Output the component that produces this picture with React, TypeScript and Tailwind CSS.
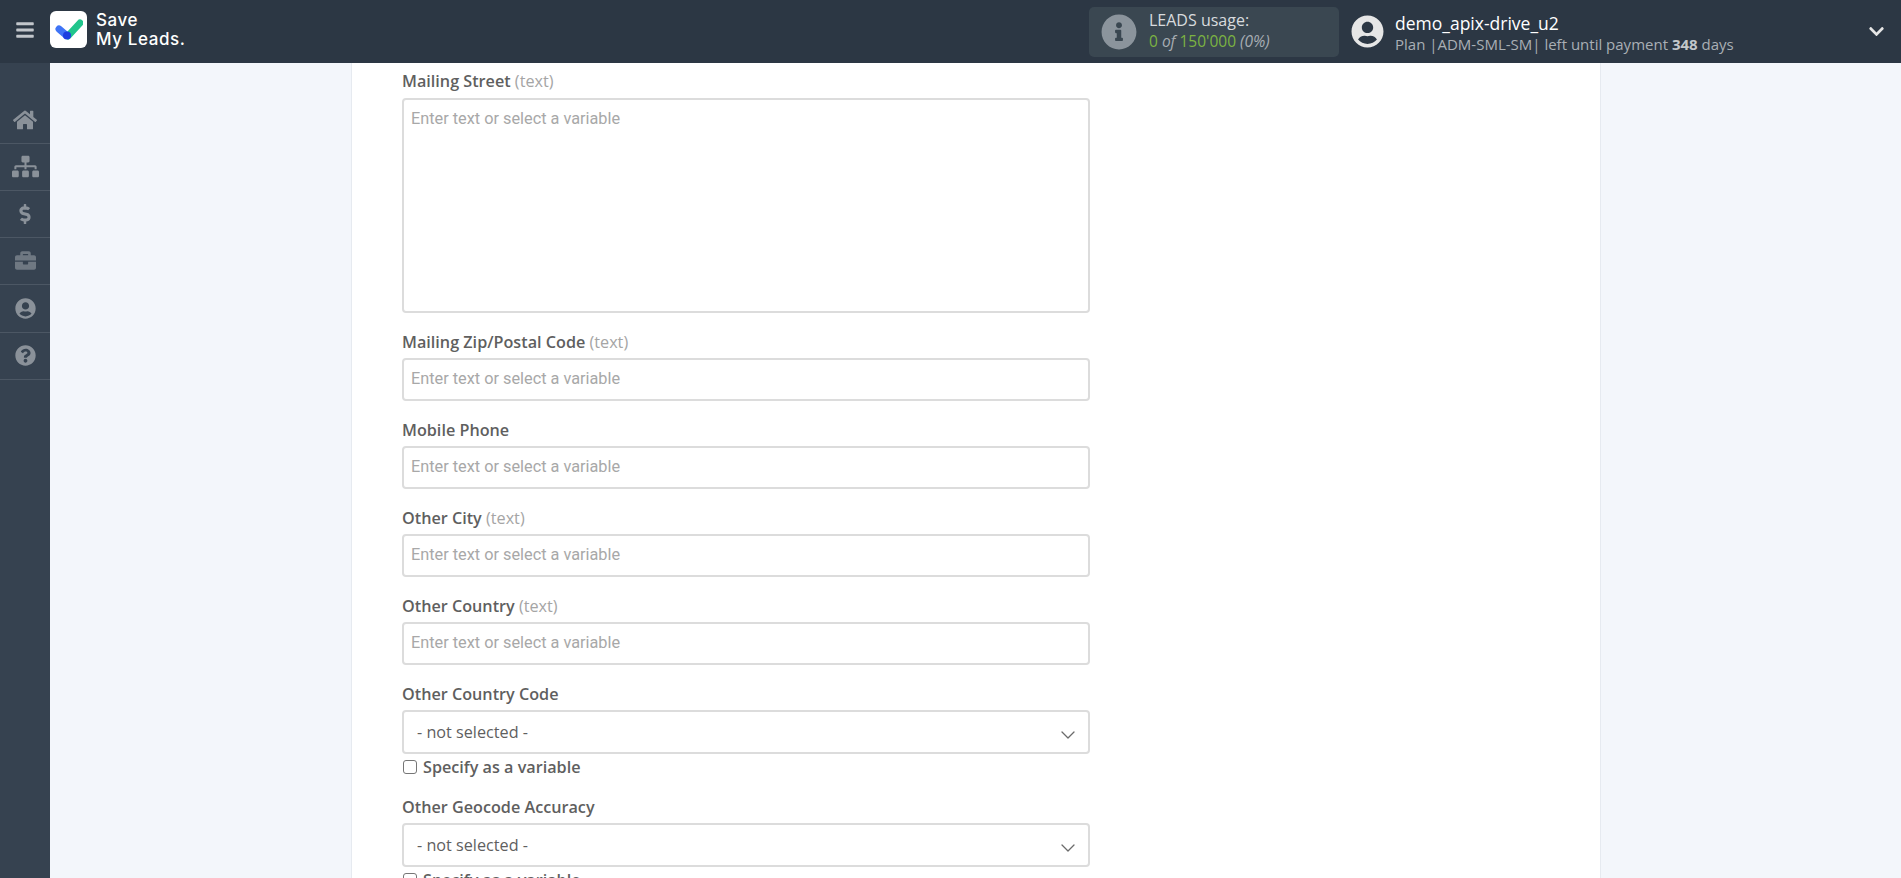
import { ChevronDown } from "lucide-react";
import {
  FaBars,
  FaBriefcase,
  FaChevronDown,
  FaDollarSign,
  FaHome,
  FaInfoCircle,
  FaQuestionCircle,
  FaSitemap,
  FaUserCircle,
} from "react-icons/fa";

const navItems = [
  { icon: FaHome, size: 24, color: "text-[#8a9199]", row: "h-[47px]" },
  { icon: FaSitemap, size: 27, color: "text-[#8a9199]", row: "h-[47px]" },
  { icon: FaDollarSign, size: 20, color: "text-[#8a9199]", row: "h-[47px]" },
  { icon: FaBriefcase, size: 21, color: "text-[#6f7882]", row: "h-[47px]" },
  { icon: FaUserCircle, size: 21, color: "text-[#8a9199]", row: "h-[48px]" },
  { icon: FaQuestionCircle, size: 21, color: "text-[#8a9199]", row: "h-[47px]" },
];

function Label({ name, hint }: { name: string; hint?: string }) {
  return (
    <div className="h-[22px] text-[16.2px] leading-[22px] font-semibold text-[#5f5f5f]">
      {name}
      {hint ? <span className="font-normal text-[#a5a5a5]"> ({hint})</span> : null}
    </div>
  );
}

function TextField({ name, hint }: { name: string; hint?: string }) {
  return (
    <div className="mb-[18px]">
      <Label name={name} hint={hint} />
      <div className="mt-[5px] flex h-[43px] items-center rounded-[4px] border-2 border-[#dcdcdc] bg-white px-[7px] pb-[1px] font-['Roboto',sans-serif] text-[16.3px] text-[#a8a8a8]">
        Enter text or select a variable
      </div>
    </div>
  );
}

function SelectField({ name }: { name: string }) {
  return (
    <div className="mb-[18px]">
      <Label name={name} />
      <div className="mt-[5px] flex h-[44px] items-center justify-between rounded-[4px] border-2 border-[#dcdcdc] bg-white pr-[8px] pl-[13px] text-[16.2px] text-[#5f5f5f]">
        - not selected -
        <ChevronDown className="mt-[6px] h-6 w-6 text-[#6b6b6b]" strokeWidth={1.3} />
      </div>
      <label className="mt-[2px] flex h-[22px] items-center text-[16.2px] font-semibold text-[#5f5f5f]">
        <span className="mr-[6px] ml-[1px] h-[14px] w-[14px] rounded-[3px] border border-[#767676] bg-white" />
        Specify as a variable
      </label>
    </div>
  );
}

export default function App() {
  return (
    <div className="flex h-[878px] flex-col overflow-hidden bg-[#f3f6fb] font-['Open_Sans',sans-serif]">
      <header className="flex h-[63px] shrink-0 items-center bg-[#2c3744]">
        <div className="mb-[3px] flex w-[50px] justify-center">
          <FaBars className="text-[#c2c6cb]" size={20} />
        </div>
        <div className="mb-[4px] flex h-[37px] w-[37px] items-center justify-center rounded-[6px] bg-white">
          <svg width="28" height="22" viewBox="0 0 28 22">
            <path d="M13 17 L25 4" stroke="#20c58c" strokeWidth="7" strokeLinecap="round" fill="none" />
            <path d="M4 10 L11 16" stroke="#3f74f6" strokeWidth="7" strokeLinecap="round" fill="none" />
            <circle cx="12" cy="16.5" r="4" fill="#1c3fe0" />
          </svg>
        </div>
        <div className="mb-[4px] ml-[9px] font-['Inter',sans-serif] text-[17px] leading-[19px] font-medium tracking-[0.6px] text-white">
          Save
          <br />
          My Leads.
        </div>
        <div className="ml-auto flex h-[50px] w-[250px] items-center rounded-[5px] bg-[#3a4751] pl-[12px]">
          <FaInfoCircle className="text-[#8b949c]" size={36} />
          <div className="mb-[2px] ml-[12px] text-[15.5px] leading-[21px]">
            <div className="text-[16px] text-[#d8dbde]">LEADS usage:</div>
            <div className="text-[#7cb342]">
              0 <i className="text-[#a7adb3]">of</i> 150'000 <i className="text-[#a7adb3]">(0%)</i>
            </div>
          </div>
        </div>
        <FaUserCircle className="ml-[12px] text-[#e6e6e6]" size={33} />
        <div className="mt-[2px] ml-[11px] w-[473px]">
          <div className="text-[17.5px] leading-[22px] text-white">demo_apix-drive_u2</div>
          <div className="text-[15px] leading-[20px] text-[#a9afb5]">
            Plan |ADM-SML-SM| left until payment <b className="text-[#c3c7cb]">348</b> days
          </div>
        </div>
        <FaChevronDown className="mr-[16px] text-[#e6e6e6]" size={17} />
      </header>
      <div className="flex min-h-0 flex-1">
        <nav className="w-[50px] shrink-0 bg-[#364250] pt-[34px]">
          {navItems.map(({ icon: Icon, size, color, row }, i) => (
            <div key={i} className={`flex items-center justify-center border-b border-[#4c5764] pb-[1px] ${row}`}>
              <Icon className={color} size={size} />
            </div>
          ))}
        </nav>
        <main className="min-w-0 flex-1 pr-[300px] pl-[301px]">
          <div className="h-full border-x border-[#e6eaf0] bg-white pt-[7px] pl-[50px]">
            <div className="w-[688px]">
              <div className="mb-[18px]">
                <Label name="Mailing Street" hint="text" />
                <div className="mt-[6px] h-[215px] rounded-[4px] border-2 border-[#dcdcdc] bg-white px-[7px] py-[8px] font-['Roboto',sans-serif] text-[16.3px] leading-[22px] text-[#a8a8a8]">
                  Enter text or select a variable
                </div>
              </div>
              <TextField name="Mailing Zip/Postal Code" hint="text" />
              <TextField name="Mobile Phone" />
              <TextField name="Other City" hint="text" />
              <TextField name="Other Country" hint="text" />
              <SelectField name="Other Country Code" />
              <SelectField name="Other Geocode Accuracy" />
            </div>
          </div>
        </main>
      </div>
    </div>
  );
}
